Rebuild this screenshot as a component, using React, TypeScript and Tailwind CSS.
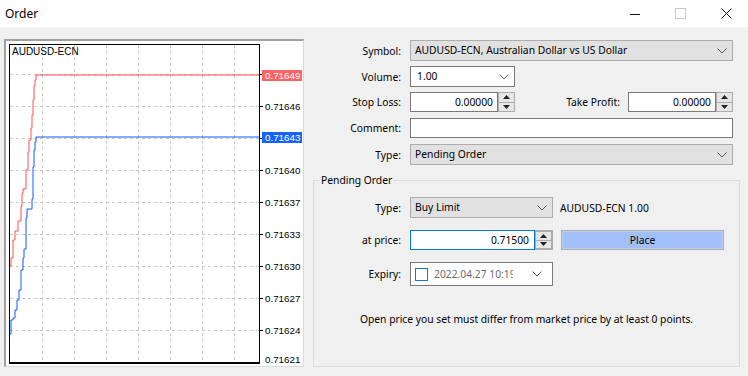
import clsx from 'clsx';

const redPts = '10,266 11,266 11,258 13,258 13,240 15,240 15,231 18,231 18,221 21,221 21,206 22,206 22,193 23,193 23,189 26,189 26,170 28,170 28,152 29,152 29,140 31,140 31,128 32,128 32,115 33,115 33,100 34,100 34,86 35,86 35,80 36,80 36,75 259,75';
const bluePts = '10,334 11,334 11,320 13,320 13,318 15,318 15,310 17,310 17,300 19,300 19,290 21,290 21,270 23,270 23,258 24,258 24,249 26,249 26,218 27,218 27,209 32,209 32,199 33,199 33,167 34,167 34,150 35,150 35,142 36,142 36,137 259,137';

const gridX = [42, 74, 106, 138, 170, 202, 234];
const gridY = [74, 106, 138, 170, 202, 234, 266, 298, 330];
const prices = [
    { y: 106, v: '0.71646' },
    { y: 170, v: '0.71640' },
    { y: 202, v: '0.71637' },
    { y: 234, v: '0.71633' },
    { y: 266, v: '0.71630' },
    { y: 298, v: '0.71627' },
    { y: 330, v: '0.71624' },
    { y: 359, v: '0.71621' },
];

const Chevron = () => (
    <svg width="10" height="6" viewBox="0 0 10 6" className="shrink-0">
        <polyline points="0.5,0.5 5,5 9.5,0.5" fill="none" stroke="#5a5a5a" strokeWidth="1" />
    </svg>
);

const Spin = () => (
    <div className="w-[17px] h-full flex flex-col border border-[#adadad] bg-[#e6e6e6] shrink-0">
        <div className="flex-1 flex items-center justify-center border-b border-[#adadad]">
            <svg width="7" height="4" viewBox="0 0 7 4"><path d="M3.5 0L7 4H0Z" fill="#222" /></svg>
        </div>
        <div className="flex-1 flex items-center justify-center">
            <svg width="7" height="4" viewBox="0 0 7 4"><path d="M0 0H7L3.5 4Z" fill="#222" /></svg>
        </div>
    </div>
);

const Select = ({ value, gray, className }: { value: string; gray?: boolean; className?: string }) => (
    <div
        className={clsx(
            'h-[21px] flex items-center pl-[4px] pr-[5px] border',
            gray ? 'bg-[#e1e1e1] border-[#adadad]' : 'bg-white border-[#7a7a7a]',
            className
        )}
    >
        <span className="flex-1 whitespace-nowrap overflow-hidden leading-[15px]">{value}</span>
        <Chevron />
    </div>
);

const Row = ({ label, labelW = 'w-[88px]', className, children }: any) => (
    <div className={clsx('flex items-center', className)}>
        <span className={clsx(labelW, 'text-right shrink-0')}>{label}</span>
        <div className="ml-[9px] flex items-center h-full">{children}</div>
    </div>
);

const SpinInput = ({ value }: { value: string }) => (
    <div className="flex h-[20px]">
        <div className="w-[88px] h-full bg-white border border-[#7a7a7a] flex items-center justify-end pr-[4px]">{value}</div>
        <Spin />
    </div>
);

function Chart() {
    return (
        <div className="ml-[4px] mt-[12px] w-[300px] h-[328px] bg-white border-l-2 border-t-2 border-l-[#a0a0a0] border-t-[#a0a0a0] border-r border-b border-r-[#dadada] border-b-[#dadada] shrink-0">
            <svg width="297" height="325" viewBox="6 41 297 325" className="block font-['Liberation_Sans',sans-serif]">
                {gridX.map((x) => (
                    <line key={x} x1={x + 0.5} y1={45} x2={x + 0.5} y2={362} stroke="#c8c8c8" strokeDasharray="3 3" />
                ))}
                {gridY.map((y) => (
                    <line key={y} x1={10} y1={y + 0.5} x2={259} y2={y + 0.5} stroke="#c8c8c8" strokeDasharray="3 3" />
                ))}
                {gridY.map((y) => (
                    <line key={'t' + y} x1={259} y1={y + 0.5} x2={263} y2={y + 0.5} stroke="#000" />
                ))}
                <polyline points={redPts} fill="none" stroke="#ff4f4f" strokeWidth="1" />
                <polyline points={bluePts} fill="none" stroke="#0a5cff" strokeWidth="1" />
                <line x1={9.5} y1={44} x2={9.5} y2={364} stroke="#000" />
                <line x1={9} y1={44.5} x2={260} y2={44.5} stroke="#000" />
                <line x1={259.5} y1={44} x2={259.5} y2={364} stroke="#000" />
                <line x1={9} y1={363} x2={260} y2={363} stroke="#000" strokeWidth="2" />
                <text x={12} y={55} fontSize="10" fill="#000">AUDUSD-ECN</text>
                {prices.map((p) => (
                    <text key={p.v} x={265} y={p.y + 3.5} fontSize="9.8" fill="#000">{p.v}</text>
                ))}
                <rect x={262} y={70} width={40} height={11} fill="#ff6464" />
                <text x={265} y={79} fontSize="9.8" fill="#fff">0.71649</text>
                <rect x={262} y={132} width={40} height={11} fill="#1464ff" />
                <text x={265} y={141} fontSize="9.8" fill="#fff">0.71643</text>
            </svg>
        </div>
    );
}

export default function App() {
    return (
        <div className="w-[748px] h-[376px] bg-[#f0f0f0] flex flex-col overflow-hidden font-['Noto_Sans',sans-serif] text-[10.3px] text-black leading-[14px]">
            <div className="h-[27px] bg-white flex items-center shrink-0">
                <span className="ml-[5px] text-[12px]">Order</span>
                <div className="ml-auto flex items-center">
                    <svg width="10" height="10" viewBox="0 0 10 10" className="mr-[35px]"><line x1="0" y1="5.5" x2="10" y2="5.5" stroke="#111" /></svg>
                    <svg width="11" height="11" viewBox="0 0 11 11" className="mr-[35px]"><rect x="0.5" y="0.5" width="10" height="10" fill="none" stroke="#c8c8c8" /></svg>
                    <svg width="11" height="11" viewBox="0 0 11 11" className="mr-[16px]"><path d="M0.5 0.5L10.5 10.5M10.5 0.5L0.5 10.5" stroke="#111" /></svg>
                </div>
            </div>
            <div className="flex flex-1">
                <Chart />
                <div className="ml-[9px] mt-[13px] w-[427px] flex flex-col">
                    <Row label="Symbol:" className="h-[21px]">
                        <Select gray value="AUDUSD-ECN, Australian Dollar vs US Dollar" className="w-[323px]" />
                    </Row>
                    <Row label="Volume:" className="h-[21px] mt-[5px]">
                        <Select value="1.00" className="w-[105px] pl-[6px]" />
                    </Row>
                    <div className="flex items-center h-[20px] mt-[5px]">
                        <span className="w-[88px] text-right shrink-0">Stop Loss:</span>
                        <div className="ml-[9px]"><SpinInput value="0.00000" /></div>
                        <span className="w-[105px] text-right shrink-0">Take Profit:</span>
                        <div className="ml-[8px]"><SpinInput value="0.00000" /></div>
                    </div>
                    <Row label="Comment:" className="h-[20px] mt-[6px]">
                        <div className="w-[323px] h-[20px] bg-white border border-[#7a7a7a]" />
                    </Row>
                    <Row label="Type:" className="h-[21px] mt-[6px]">
                        <Select gray value="Pending Order" className="w-[323px]" />
                    </Row>

                    <div className="relative mt-[15px] h-[187px] border border-[#dcdcdc] pt-[16px] flex flex-col">
                        <span className="absolute left-[6px] top-[-8px] px-[1px] bg-[#f0f0f0]">Pending Order</span>
                        <Row label="Type:" labelW="w-[87px]" className="h-[21px]">
                            <Select gray value="Buy Limit" className="w-[143px]" />
                            <span className="ml-[7px]">AUDUSD-ECN 1.00</span>
                        </Row>
                        <Row label="at price:" labelW="w-[87px]" className="h-[20px] mt-[12px]">
                            <div className="flex h-[20px]">
                                <div className="w-[125px] h-full bg-white border border-[#0078d7] flex items-center justify-end pr-[5px]">0.71500</div>
                                <div className="w-[18px] h-full border border-l-0 border-[#adadad] flex"><Spin /></div>
                            </div>
                            <div className="ml-[8px] w-[163px] h-[20px] border border-[#adadad] bg-[#a2bff7] shadow-[inset_0_0_0_1px_#b9cef8] flex items-center justify-center">Place</div>
                        </Row>
                        <Row label="Expiry:" labelW="w-[87px]" className="h-[24px] mt-[12px]">
                            <div className="w-[143px] h-[24px] bg-white border border-[#7a7a7a] flex items-center pl-[4px]">
                                <div className="w-[13px] h-[13px] border border-[#1a73d1] shrink-0" />
                                <span className="ml-[6px] w-[79px] shrink-0 overflow-hidden whitespace-nowrap text-[#6d6d6d]">2022.04.27 10:19</span>
                                <div className="ml-[19px]"><Chevron /></div>
                            </div>
                        </Row>
                        <div className="mt-[26px] text-center">Open price you set must differ from market price by at least 0 points.</div>
                    </div>
                </div>
            </div>
        </div>
    );
}
